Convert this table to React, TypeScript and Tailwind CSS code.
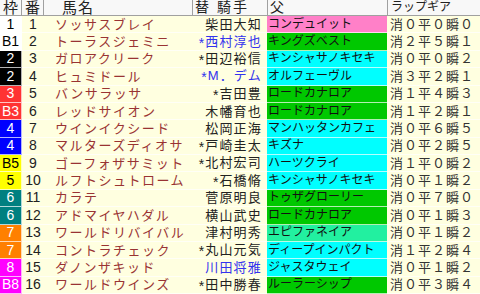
import React from 'react';

type Row = {
    waku: string;
    uma: number;
    name: string;
    jockey: string;
    blue?: boolean;
    sire: string;
    sireBg: string;
    lap: string;
};

// 枠色: [背景, 文字]
const WAKU: Record<string, [string, string]> = {
    '1': ['bg-white', 'text-black'],
    '2': ['bg-black', 'text-white'],
    '3': ['bg-[#ff3333]', 'text-white'],
    '4': ['bg-[#0000ff]', 'text-white'],
    '5': ['bg-[#ffff00]', 'text-black'],
    '6': ['bg-[#008080]', 'text-white'],
    '7': ['bg-[#ff8000]', 'text-white'],
    '8': ['bg-[#ff00ff]', 'text-white'],
};

const PINK = 'bg-[#ff80c8]';
const GREEN = 'bg-[#00c800]';
const CYAN = 'bg-[#00ffff]';
const MINT = 'bg-[#22f0a0]';

const rows: Row[] = [
    { waku: '1', uma: 1, name: 'ソッサスブレイ', jockey: '柴田大知', sire: 'コンデュイット', sireBg: PINK, lap: '消０平０瞬０' },
    { waku: 'B1', uma: 2, name: 'トーラスジェミニ', jockey: '*西村淳也', blue: true, sire: 'キングズベスト', sireBg: GREEN, lap: '消２平５瞬１' },
    { waku: '2', uma: 3, name: 'ガロアクリーク', jockey: '*田辺裕信', sire: 'キンシャサノキセキ', sireBg: CYAN, lap: '消０平０瞬２' },
    { waku: '2', uma: 4, name: 'ヒュミドール', jockey: '*M．デム', blue: true, sire: 'オルフェーヴル', sireBg: CYAN, lap: '消３平２瞬１' },
    { waku: '3', uma: 5, name: 'バンサラッサ', jockey: '*吉田豊', sire: 'ロードカナロア', sireBg: GREEN, lap: '消１平４瞬３' },
    { waku: 'B3', uma: 6, name: 'レッドサイオン', jockey: '木幡育也', sire: 'ロードカナロア', sireBg: GREEN, lap: '消１平２瞬１' },
    { waku: '4', uma: 7, name: 'ウインイクシード', jockey: '松岡正海', sire: 'マンハッタンカフェ', sireBg: CYAN, lap: '消０平６瞬５' },
    { waku: '4', uma: 8, name: 'マルターズディオサ', jockey: '*戸崎圭太', sire: 'キズナ', sireBg: CYAN, lap: '消０平２瞬５' },
    { waku: 'B5', uma: 9, name: 'ゴーフォザサミット', jockey: '*北村宏司', sire: 'ハーツクライ', sireBg: CYAN, lap: '消１平０瞬２' },
    { waku: '5', uma: 10, name: 'ルフトシュトローム', jockey: '*石橋脩', sire: 'キンシャサノキセキ', sireBg: CYAN, lap: '消０平１瞬２' },
    { waku: '6', uma: 11, name: 'カラテ', jockey: '菅原明良', sire: 'トゥザグローリー', sireBg: GREEN, lap: '消０平７瞬０' },
    { waku: '6', uma: 12, name: 'アドマイヤハダル', jockey: '横山武史', sire: 'ロードカナロア', sireBg: GREEN, lap: '消０平１瞬３' },
    { waku: '7', uma: 13, name: 'ワールドリバイバル', jockey: '津村明秀', sire: 'エピファネイア', sireBg: MINT, lap: '消０平１瞬２' },
    { waku: '7', uma: 14, name: 'コントラチェック', jockey: '*丸山元気', sire: 'ディープインパクト', sireBg: CYAN, lap: '消１平２瞬４' },
    { waku: '8', uma: 15, name: 'ダノンザキッド', jockey: '川田将雅', blue: true, sire: 'ジャスタウェイ', sireBg: CYAN, lap: '消０平１瞬２' },
    { waku: 'B8', uma: 16, name: 'ワールドウインズ', jockey: '*田中勝春', sire: 'ルーラーシップ', sireBg: GREEN, lap: '消０平３瞬４' },
];

const FONT = "font-['Liberation_Sans','Noto_Sans_CJK_JP',sans-serif]";
const COLS = 'grid grid-cols-[22px_22px_148px_75px_120px_93px]';

// 乗り替わり印の「*」は少し下げて中央寄りに
function Jockey({ name }: { name: string }) {
    if (!name.startsWith('*')) return <>{name}</>;
    return (
        <>
            <span className="text-[14px] leading-none tracking-[0px] mr-[1px] align-[-2px]">*</span>
            {name.slice(1)}
        </>
    );
}

export default function App() {
    return (
        <div className={`w-[480px] h-[294px] flex flex-col bg-[#ffffe0] overflow-hidden ${FONT}`}>
            {/* ヘッダー */}
            <div className={`${COLS} h-[16px] shrink-0 bg-[#f8f8f8] border-b border-[#a0a0a0] text-[#222] leading-[15px]`}>
                <div className="border-r border-[#a0a0a0] text-[15px] text-center">枠</div>
                <div className="border-r border-[#a0a0a0] text-[15px] text-center">番</div>
                <div className="text-[15px] pl-[18px] tracking-[1px]">馬名</div>
                <div className="border-l border-[#a0a0a0] text-[14px] pl-[2px] tracking-[2px]">替 騎手</div>
                <div className="border-l border-[#a0a0a0] text-[14px] pl-[2px]">父</div>
                <div className="border-l border-[#a0a0a0] text-[12px] pl-[3px]">ラップギア</div>
            </div>

            {rows.map((r) => {
                const [wBg, wText] = WAKU[r.waku.replace('B', '')];
                return (
                    <div key={r.uma} className={`${COLS} flex-1 min-h-0 leading-[15px]`}>
                        <div className={`${wBg} ${wText} flex items-center justify-center text-[14px] border-b border-r border-white/70`}>
                            {r.waku}
                        </div>
                        <div className="flex items-center justify-center text-[14px] text-[#222] border-b border-white/70">
                            {r.uma}
                        </div>
                        <div className="flex items-center pl-[11px] text-[13px] tracking-[1.5px] text-[#993333] whitespace-nowrap overflow-hidden border-b border-white/70">
                            {r.name}
                        </div>
                        <div
                            className={`flex items-center justify-end pr-[5px] text-[13px] tracking-[1.2px] whitespace-nowrap border-b border-white/70 ${
                                r.blue ? 'text-[#3333ee]' : 'text-[#222]'
                            }`}
                        >
                            <span>
                                <Jockey name={r.jockey} />
                            </span>
                        </div>
                        <div className={`${r.sireBg} flex items-center pl-[1px] text-[12px] text-[#111] whitespace-nowrap overflow-hidden border-b border-white/70`}>
                            {r.sire}
                        </div>
                        <div className="flex items-center pl-[3px] text-[13px] tracking-[1px] text-[#333] whitespace-nowrap border-b border-white/70">
                            {r.lap}
                        </div>
                    </div>
                );
            })}
        </div>
    );
}
